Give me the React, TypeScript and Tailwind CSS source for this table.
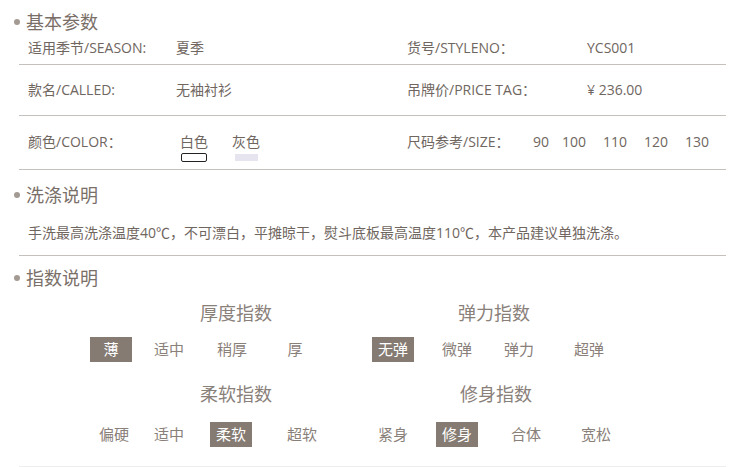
import React from "react";

const font = { fontFamily: '"Open Sans","Noto Sans CJK SC",sans-serif' };

function Heading({ children }: { children: React.ReactNode }) {
  return (
    <div className="flex h-6 items-center">
      <span className="ml-[14px] mr-[6px] h-[6px] w-[6px] rounded-full bg-[#a39a93]" />
      <span className="text-[18px] leading-6 text-[#7a6f68]">{children}</span>
    </div>
  );
}

type Index = {
  title: string;
  titleLeft: string;
  optionsTop: string;
  options: string[];
  margins: string[];
  active: number;
};

function IndexBlock({ title, titleLeft, optionsTop, options, margins, active }: Index) {
  return (
    <div className="flex flex-col">
      <div className={`text-[18px] leading-6 text-[#8a807a] ${titleLeft}`}>{title}</div>
      <div className={`flex ${optionsTop}`}>
        {options.map((o, i) => (
          <span
            key={o}
            className={`flex h-[25px] w-[42px] shrink-0 items-center justify-center whitespace-nowrap text-[15px] ${margins[i]} ${
              i === active ? "bg-[#857b73] text-white" : "text-[#8a807a]"
            }`}
          >
            {o}
          </span>
        ))}
      </div>
    </div>
  );
}

export default function App() {
  return (
    <div className="h-[467px] w-[750px] overflow-hidden bg-white text-[14px] text-[#6f6660]" style={font}>
      <div className="pt-[10px]">
        <Heading>基本参数</Heading>
      </div>

      <div className="ml-[19px] w-[707px]">
        <div className="flex h-[31px] items-start border-b border-[#c4c0bd] pt-[4px] leading-5">
          <span className="ml-[9px] w-[148px]">适用季节/SEASON:</span>
          <span className="w-[231px]">夏季</span>
          <span className="w-[180px]">货号/STYLENO：</span>
          <span>YCS001</span>
        </div>
        <div className="flex h-[51px] items-center border-b border-[#c4c0bd] leading-5">
          <span className="ml-[9px] w-[148px]">款名/CALLED:</span>
          <span className="w-[231px]">无袖衬衫</span>
          <span className="w-[180px]">吊牌价/PRICE TAG：</span>
          <span>¥ 236.00</span>
        </div>
        <div className="flex h-[54px] items-start border-b border-[#c4c0bd] pt-[16px] leading-5">
          <span className="ml-[9px] w-[148px]">颜色/COLOR：</span>
          <div className="flex w-[231px] gap-[20px]">
            <div className="flex flex-col items-center">
              <span className="px-[4px]">白色</span>
              <span className="mt-[1px] h-[9px] w-[26px] rounded-[2px] border border-[#222]" />
            </div>
            <div className="flex flex-col items-center">
              <span>灰色</span>
              <span className="mt-[2px] h-[7px] w-[23px] bg-[#e6e4ee]" />
            </div>
          </div>
          <span className="w-[126px]">尺码参考/SIZE：</span>
          <div className="flex">
            <span>90</span>
            <span className="ml-[13px]">100</span>
            <span className="ml-[17px]">110</span>
            <span className="ml-[17px]">120</span>
            <span className="ml-[17px]">130</span>
          </div>
        </div>
      </div>

      <div className="mt-[13px]">
        <Heading>洗涤说明</Heading>
      </div>
      <div className="ml-[19px] w-[707px] border-b border-[#c4c0bd] pb-[12px] pt-[16px]">
        <p className="ml-[9px] text-[14px] leading-5">
          手洗最高洗涤温度40℃，不可漂白，平摊晾干，熨斗底板最高温度110℃，本产品建议单独洗涤。
        </p>
      </div>

      <div className="mt-[10px]">
        <Heading>指数说明</Heading>
      </div>

      <div className="mt-[11px] grid grid-cols-[282px_300px] gap-y-[20px] pl-[90px]">
        <IndexBlock
          title="厚度指数"
          titleLeft="ml-[110px]"
          optionsTop="mt-[12px]"
          options={["薄", "适中", "稍厚", "厚"]}
          margins={["ml-0", "ml-[16px]", "ml-[21px]", "ml-[21px]"]}
          active={0}
        />
        <IndexBlock
          title="弹力指数"
          titleLeft="ml-[86px]"
          optionsTop="mt-[12px]"
          options={["无弹", "微弹", "弹力", "超弹"]}
          margins={["ml-0", "ml-[22px]", "ml-[20px]", "ml-[28px]"]}
          active={0}
        />
        <IndexBlock
          title="柔软指数"
          titleLeft="ml-[110px]"
          optionsTop="mt-[16px]"
          options={["偏硬", "适中", "柔软", "超软"]}
          margins={["ml-[3px]", "ml-[13px]", "ml-[20px]", "ml-[29px]"]}
          active={2}
        />
        <IndexBlock
          title="修身指数"
          titleLeft="ml-[88px]"
          optionsTop="mt-[16px]"
          options={["紧身", "修身", "合体", "宽松"]}
          margins={["ml-0", "ml-[22px]", "ml-[27px]", "ml-[28px]"]}
          active={1}
        />
      </div>

      <div className="ml-[19px] mt-[19px] w-[707px] border-b border-[#eeeeee]" />
    </div>
  );
}
